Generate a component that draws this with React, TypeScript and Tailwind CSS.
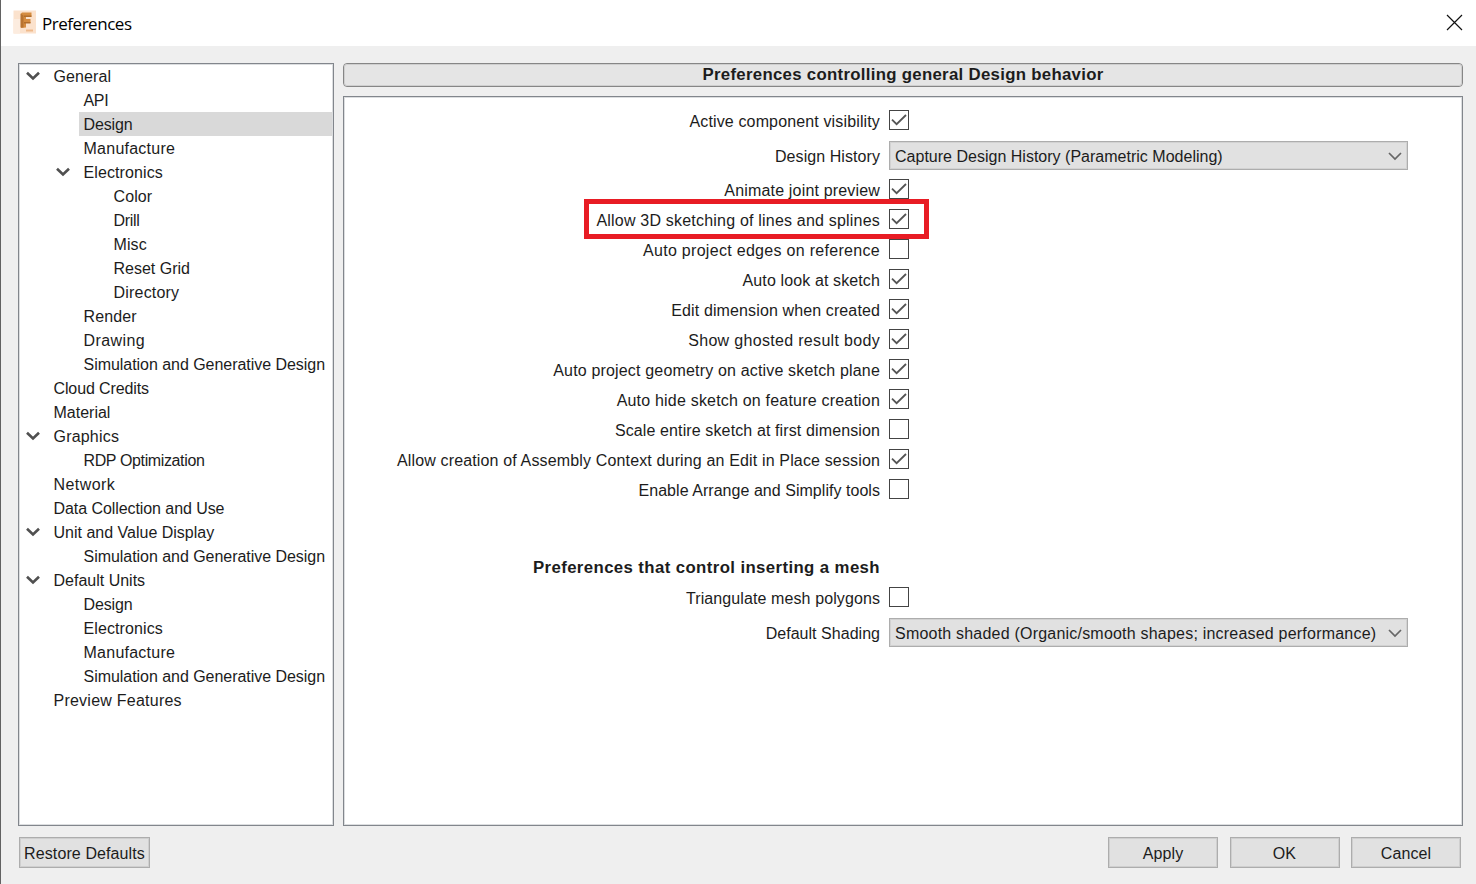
import React from "react";

type Node = { label: string; level: 0 | 1 | 2; open?: boolean; selected?: boolean; tracking?: string };

const tree: Node[] = [
  { label: "General", level: 0, open: true },
  { label: "API", level: 1, tracking: "tracking-[-0.3px]" },
  { label: "Design", level: 1, selected: true, tracking: "tracking-[-0.12px]" },
  { label: "Manufacture", level: 1, tracking: "tracking-[0.25px]" },
  { label: "Electronics", level: 1, open: true },
  { label: "Color", level: 2 },
  { label: "Drill", level: 2, tracking: "tracking-[-0.3px]" },
  { label: "Misc", level: 2 },
  { label: "Reset Grid", level: 2, tracking: "tracking-normal" },
  { label: "Directory", level: 2, tracking: "tracking-[0.2px]" },
  { label: "Render", level: 1 },
  { label: "Drawing", level: 1, tracking: "tracking-[0.4px]" },
  { label: "Simulation and Generative Design", level: 1, tracking: "tracking-[-0.04px]" },
  { label: "Cloud Credits", level: 0, tracking: "tracking-[-0.12px]" },
  { label: "Material", level: 0, tracking: "tracking-normal" },
  { label: "Graphics", level: 0, open: true, tracking: "tracking-[0.2px]" },
  { label: "RDP Optimization", level: 1, tracking: "tracking-[-0.37px]" },
  { label: "Network", level: 0, tracking: "tracking-[0.42px]" },
  { label: "Data Collection and Use", level: 0, tracking: "tracking-[-0.07px]" },
  { label: "Unit and Value Display", level: 0, open: true, tracking: "tracking-normal" },
  { label: "Simulation and Generative Design", level: 1, tracking: "tracking-[-0.04px]" },
  { label: "Default Units", level: 0, open: true, tracking: "tracking-normal" },
  { label: "Design", level: 1, tracking: "tracking-[-0.12px]" },
  { label: "Electronics", level: 1 },
  { label: "Manufacture", level: 1, tracking: "tracking-[0.25px]" },
  { label: "Simulation and Generative Design", level: 1, tracking: "tracking-[-0.04px]" },
  { label: "Preview Features", level: 0, tracking: "tracking-[0.24px]" },
];

const indent = { 0: "pl-0", 1: "pl-[30px]", 2: "pl-[60px]" };

const options: [string, boolean, string][] = [
  ["Animate joint preview", true, "tracking-[0.17px]"],
  ["Allow 3D sketching of lines and splines", true, "tracking-[0.2px]"],
  ["Auto project edges on reference", false, "tracking-[0.3px]"],
  ["Auto look at sketch", true, "tracking-[0.12px]"],
  ["Edit dimension when created", true, "tracking-[0.12px]"],
  ["Show ghosted result body", true, "tracking-[0.32px]"],
  ["Auto project geometry on active sketch plane", true, "tracking-[0.17px]"],
  ["Auto hide sketch on feature creation", true, "tracking-[0.2px]"],
  ["Scale entire sketch at first dimension", false, "tracking-[0.12px]"],
  ["Allow creation of Assembly Context during an Edit in Place session", true, "tracking-[0.15px]"],
  ["Enable Arrange and Simplify tools", false, "tracking-[0.04px]"],
];

function TreeRow({ node }: { node: Node }) {
  return (
    <li className={`flex h-6 items-center ${indent[node.level]}`}>
      <span className="flex h-6 w-[30px] shrink-0 items-center justify-center pr-[2px]">
        {node.open && (
          <svg width="14" height="10" viewBox="0 0 14 10" fill="none" stroke="#505050" strokeWidth="2.6">
            <path d="M1 1.7 L7 7.5 L13 1.7" />
          </svg>
        )}
      </span>
      <span
        className={`flex h-6 flex-1 items-center whitespace-nowrap pl-[4.5px] pt-[2px] ${node.tracking ?? ""} ${node.selected ? "bg-[#d9d9d9]" : ""}`}
      >
        {node.label}
      </span>
    </li>
  );
}

type RowProps = { label: string; children: React.ReactNode; className?: string; tracking?: string };

function Row({ label, children, className = "h-[30px]", tracking = "" }: RowProps) {
  return (
    <div className={`flex shrink-0 items-center ${className}`}>
      <span className={`w-[536px] shrink-0 whitespace-nowrap pt-[3px] text-right ${tracking}`}>{label}</span>
      <span className="ml-[9px] flex">{children}</span>
    </div>
  );
}

function Check({ on }: { on: boolean }) {
  return (
    <span className="flex size-5 items-center justify-center border-[1.5px] border-[#444] bg-white">
      {on && (
        <svg className="shrink-0" width="18" height="18" viewBox="0 0 18 18" fill="none" stroke="#555" strokeWidth="1.8">
          <path d="M2 8.6 L6.6 13.2 L16 4" />
        </svg>
      )}
    </span>
  );
}

function Select({ value, tracking }: { value: string; tracking: string }) {
  return (
    <span className="flex h-[29px] w-[519px] items-center justify-between border border-[#adadad] bg-[#e1e1e1] pl-[5px] pr-[5px] outline-1 -outline-offset-2 outline-[#d2d2d2]">
      <span className={`whitespace-nowrap pt-[3px] ${tracking}`}>{value}</span>
      <svg className="mt-[3px]" width="14" height="9" viewBox="0 0 14 9" fill="none" stroke="#666" strokeWidth="1.7">
        <path d="M1 1 L7 7 L13 1" />
      </svg>
    </span>
  );
}

function Button({ label, width = "w-[110px]" }: { label: string; width?: string }) {
  return (
    <button
      className={`flex h-[31px] ${width} items-center justify-center whitespace-nowrap border border-[#adadad] bg-[#e1e1e1] pt-[3px] outline-1 -outline-offset-2 outline-[#cfcfcf]`}
    >
      {label}
    </button>
  );
}

export default function App() {
  return (
    <div className="flex h-[884px] w-[1476px] flex-col overflow-hidden border-l border-[#626262] bg-[#efefef] font-['Liberation_Sans',Arial,sans-serif] text-[16px] leading-6 tracking-[0.1px] text-[#1c1c1c]">
      <header className="flex h-[46px] shrink-0 items-center justify-between bg-white pl-[12px] pr-[13px]">
        <div className="flex items-center">
          <svg className="-mt-[2px]" width="24" height="24" viewBox="0 0 24 24">
            <rect x="0.5" y="0.5" width="22.5" height="23" fill="#fbe2cd" />
            <path d="M0.5 9 H7 V23.5 H0.5Z" fill="#fcecdf" />
            <path d="M9 2.5 H18.5 V6.5 H13 V9 H17.5 V13 H13 V17.5 L8 18 V3.5Z" fill="#d58c40" />
            <path d="M7.5 3.5 L10.5 5.5 V17.5 H7.5Z" fill="#b87330" />
            <path d="M11 5.5 H18.5 V7 H11Z M11 12 H17.5 V13.5 H11Z" fill="#b06c2b" />
            <path d="M13 20.5 H20" stroke="#efba8c" strokeWidth="2" />
          </svg>
          <span className="ml-[5px] pt-px font-['Open_Sans','Noto_Sans',sans-serif] text-[17px] tracking-[-0.47px] text-black">Preferences</span>
        </div>
        <svg className="-mt-px" width="17" height="17" viewBox="0 0 17 17" stroke="#111" strokeWidth="1.2">
          <path d="M1 1 L16 16 M16 1 L1 16" />
        </svg>
      </header>

      <main className="mt-[17px] flex h-[763px] shrink-0 gap-[9px] pl-[17px] pr-[13px]">
        <ul className="w-[316px] shrink-0 border border-[#82868c] bg-white outline-1 -outline-offset-2 outline-[#dcdee0]">
          {tree.map((n, i) => (
            <TreeRow key={i} node={n} />
          ))}
        </ul>
        <section className="flex min-w-0 flex-1 flex-col gap-[9px]">
          <h1 className="flex h-6 shrink-0 items-center justify-center rounded-[4px] border border-[#868686] bg-[#e5e5e5] text-[16.8px] font-bold tracking-[0.3px] outline-1 -outline-offset-2 outline-[#cfcfcf]">
            Preferences controlling general Design behavior
          </h1>
          <div className="flex min-h-0 flex-1 flex-col border border-[#82868c] bg-white pt-[8px] outline-1 -outline-offset-2 outline-[#dcdee0]">
            <Row label="Active component visibility" tracking="tracking-[0.14px]">
              <Check on />
            </Row>
            <Row label="Design History" className="h-[39px] pt-px" tracking="tracking-[0.07px]">
              <Select value="Capture Design History (Parametric Modeling)" tracking="tracking-[0.01px]" />
            </Row>
            {options.map(([label, on, tracking], i) => (
              <div key={label} className="relative flex flex-col">
                <Row label={label} tracking={tracking}>
                  <Check on={on} />
                </Row>
                {i === 1 && (
                  <span className="absolute left-[240px] top-[-5px] z-10 h-[40px] w-[345px] border-[5px] border-[#e81c24]" />
                )}
              </div>
            ))}
            <h2 className="mt-[49px] h-[29px] w-[536px] shrink-0 whitespace-nowrap pt-[3px] text-right text-[16.8px] font-bold tracking-[0.39px]">
              Preferences that control inserting a mesh
            </h2>
            <Row label="Triangulate mesh polygons">
              <Check on={false} />
            </Row>
            <Row label="Default Shading" className="h-[39px] pt-px" tracking="tracking-[0.03px]">
              <Select value="Smooth shaded (Organic/smooth shapes; increased performance)" tracking="tracking-[0.21px]" />
            </Row>
          </div>
        </section>
      </main>

      <footer className="mt-[11px] flex shrink-0 justify-between pl-[18px] pr-[15px]">
        <Button label="Restore Defaults" width="w-[131px]" />
        <div className="flex gap-[11.5px]">
          <Button label="Apply" />
          <Button label="OK" />
          <Button label="Cancel" />
        </div>
      </footer>
    </div>
  );
}
